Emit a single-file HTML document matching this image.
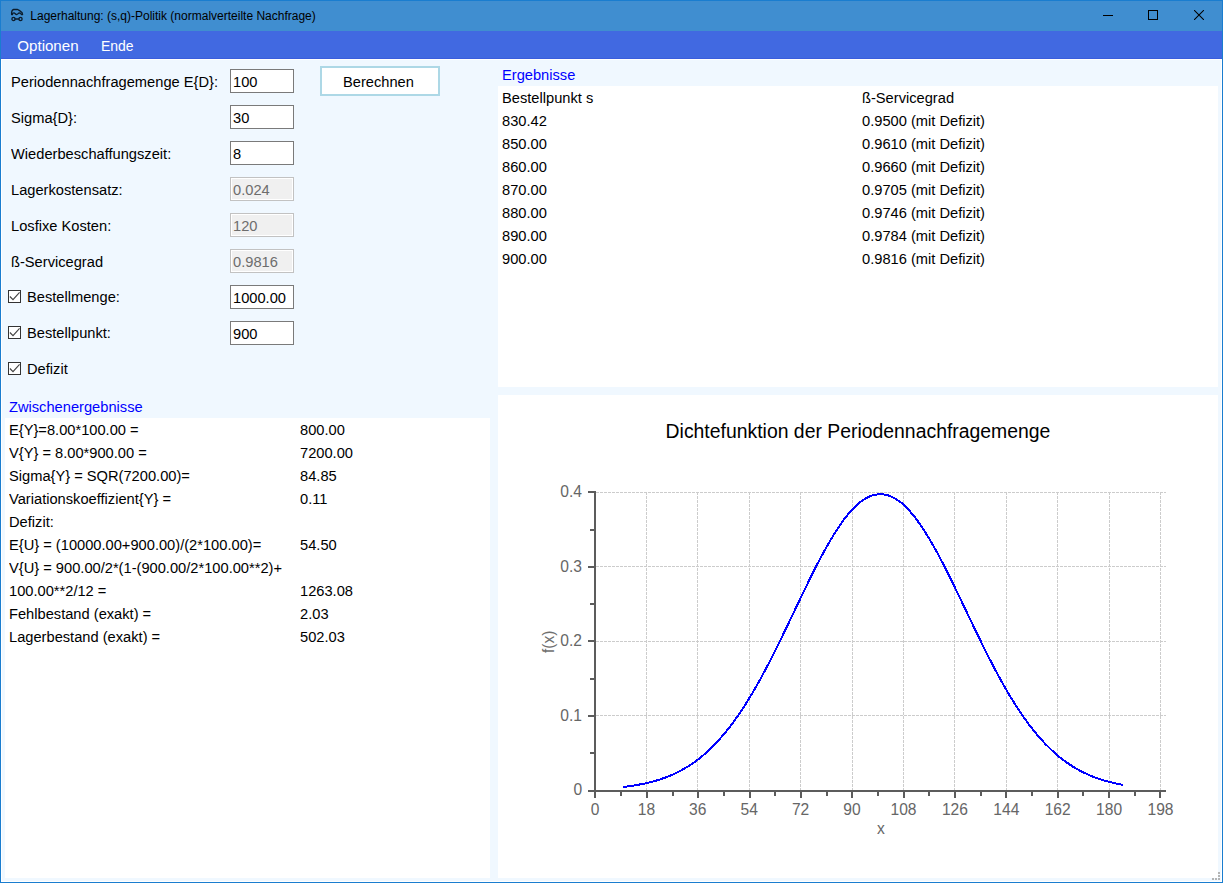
<!DOCTYPE html>
<html><head><meta charset="utf-8"><title>Lagerhaltung</title>
<style>
html,body{margin:0;padding:0;}
body{width:1223px;height:883px;overflow:hidden;background:#F0F8FF;position:relative;font-family:"Liberation Sans",sans-serif;}
.t{position:absolute;white-space:pre;line-height:1;font-family:"Liberation Sans",sans-serif;}
.b{position:absolute;box-sizing:border-box;}
.in{position:absolute;box-sizing:border-box;width:64px;height:24px;border:1px solid #7A7A7A;background:#fff;}
.in.dis{border-color:#C2C2C2;background:#F0F0F0;box-shadow:inset 0 0 0 1px #fff;}
.cb{position:absolute;box-sizing:border-box;width:13px;height:13px;border:1px solid #333;background:#fff;}
</style></head><body>

<div class="b" style="left:0;top:0;width:1223px;height:31px;background:#408ED0;"></div>
<div class="b" style="left:0;top:31px;width:1223px;height:28px;background:#4169E1;"></div>
<div class="b" style="left:1px;top:59px;width:1221px;height:823px;border:1px solid #fff;"></div>
<div class="b" style="left:0;top:58px;width:1223px;height:1px;background:#3A5DDC;"></div>
<div class="b" style="left:0;top:0;width:1223px;height:883px;border:1px solid #1A7DCF;"></div>
<svg class="b" style="left:10px;top:8px" width="14" height="14" viewBox="0 0 14 14" fill="none" stroke="#0B1C2C" stroke-width="1.3" stroke-linecap="round" stroke-linejoin="round">
<path d="M1.6 6.6 L1.6 4.9 C1.7 3.4 2.4 1.7 3.6 1.5 L7.6 1.5 C8.6 1.9 9.6 2.9 10.6 3.3 C12 3.9 12.6 4.9 12.6 6.6 L11.4 6.6 C11 5.4 10.2 4.9 9.2 4.9 C8.2 5 7.9 6.5 6.6 6.5 C5.3 6.5 5.2 4.9 3.9 4.9 C3 4.9 2.6 5.6 2.4 6.6 Z"/>
<circle cx="3.5" cy="11" r="1.6"/><circle cx="10.5" cy="11" r="1.6"/>
<path d="M5.1 11 L8.9 11" stroke-width="1.6"/>
</svg>
<div class="t " style="left:30.3px;top:9.84px;font-size:12px;color:#000;">Lagerhaltung: (s,q)-Politik (normalverteilte Nachfrage)</div>
<div class="b" style="left:1103px;top:15px;width:10px;height:1px;background:#000"></div>
<div class="b" style="left:1148px;top:10px;width:10px;height:10px;border:1px solid #000"></div>
<svg class="b" style="left:1194px;top:10px" width="10" height="10" viewBox="0 0 10 10"><path d="M0 0 L10 10 M10 0 L0 10" stroke="#000" stroke-width="1.05" fill="none"/></svg>
<div class="t " style="left:17.3px;top:37.92px;font-size:15.1px;color:#fff;">Optionen</div>
<div class="t " style="left:100.5px;top:37.92px;font-size:15.1px;color:#fff;transform:scaleX(0.9250);transform-origin:0 0;">Ende</div>
<div class="t " style="left:11.3px;top:73.93px;font-size:15.2px;color:#000;transform:scaleX(0.9651);transform-origin:0 0;">Periodennachfragemenge E{D}:</div>
<div class="in" style="left:230px;top:69px"></div>
<div class="t " style="left:233.0px;top:73.93px;font-size:15.2px;color:#000;transform:scaleX(0.9651);transform-origin:0 0;">100</div>
<div class="t " style="left:11.3px;top:109.93px;font-size:15.2px;color:#000;transform:scaleX(0.9651);transform-origin:0 0;">Sigma{D}:</div>
<div class="in" style="left:230px;top:105px"></div>
<div class="t " style="left:233.0px;top:109.93px;font-size:15.2px;color:#000;transform:scaleX(0.9651);transform-origin:0 0;">30</div>
<div class="t " style="left:11.3px;top:145.93px;font-size:15.2px;color:#000;transform:scaleX(0.9651);transform-origin:0 0;">Wiederbeschaffungszeit:</div>
<div class="in" style="left:230px;top:141px"></div>
<div class="t " style="left:233.0px;top:145.93px;font-size:15.2px;color:#000;transform:scaleX(0.9651);transform-origin:0 0;">8</div>
<div class="t " style="left:11.3px;top:181.93px;font-size:15.2px;color:#000;transform:scaleX(0.9651);transform-origin:0 0;">Lagerkostensatz:</div>
<div class="in dis" style="left:230px;top:177px"></div>
<div class="t " style="left:233.0px;top:181.93px;font-size:15.2px;color:#6D6D6D;transform:scaleX(0.9651);transform-origin:0 0;">0.024</div>
<div class="t " style="left:11.3px;top:217.93px;font-size:15.2px;color:#000;transform:scaleX(0.9651);transform-origin:0 0;">Losfixe Kosten:</div>
<div class="in dis" style="left:230px;top:213px"></div>
<div class="t " style="left:233.0px;top:217.93px;font-size:15.2px;color:#6D6D6D;transform:scaleX(0.9651);transform-origin:0 0;">120</div>
<div class="t " style="left:11.3px;top:253.93px;font-size:15.2px;color:#000;transform:scaleX(0.9651);transform-origin:0 0;">ß-Servicegrad</div>
<div class="in dis" style="left:230px;top:249px"></div>
<div class="t " style="left:233.0px;top:253.93px;font-size:15.2px;color:#6D6D6D;transform:scaleX(0.9651);transform-origin:0 0;">0.9816</div>
<div class="cb" style="left:8px;top:290px"><svg width="11" height="11" viewBox="0 0 11 11" style="position:absolute;left:0;top:0"><path d="M0.9 5.5 L4 8.6 L10.6 1.3" stroke="#444" stroke-width="1.15" fill="none"/></svg></div>
<div class="t " style="left:27.3px;top:289.43px;font-size:15.2px;color:#000;transform:scaleX(0.9651);transform-origin:0 0;">Bestellmenge:</div>
<div class="in" style="left:230px;top:285px"></div>
<div class="t " style="left:233.0px;top:289.93px;font-size:15.2px;color:#000;transform:scaleX(0.9651);transform-origin:0 0;">1000.00</div>
<div class="cb" style="left:8px;top:326px"><svg width="11" height="11" viewBox="0 0 11 11" style="position:absolute;left:0;top:0"><path d="M0.9 5.5 L4 8.6 L10.6 1.3" stroke="#444" stroke-width="1.15" fill="none"/></svg></div>
<div class="t " style="left:27.3px;top:325.43px;font-size:15.2px;color:#000;transform:scaleX(0.9651);transform-origin:0 0;">Bestellpunkt:</div>
<div class="in" style="left:230px;top:321px"></div>
<div class="t " style="left:233.0px;top:325.93px;font-size:15.2px;color:#000;transform:scaleX(0.9651);transform-origin:0 0;">900</div>
<div class="cb" style="left:8px;top:362px"><svg width="11" height="11" viewBox="0 0 11 11" style="position:absolute;left:0;top:0"><path d="M0.9 5.5 L4 8.6 L10.6 1.3" stroke="#444" stroke-width="1.15" fill="none"/></svg></div>
<div class="t " style="left:27.3px;top:361.43px;font-size:15.2px;color:#000;transform:scaleX(0.9651);transform-origin:0 0;">Defizit</div>
<div class="b" style="left:320px;top:66px;width:120px;height:30px;border:2px solid #ADD8E6;background:#fff"></div>
<div class="t " style="left:343.2px;top:73.93px;font-size:15.2px;color:#000;transform:scaleX(0.9651);transform-origin:0 0;">Berechnen</div>
<div class="t " style="left:9px;top:399.23px;font-size:15.2px;color:#0000FF;transform:scaleX(0.9651);transform-origin:0 0;">Zwischenergebnisse</div>
<div class="b" style="left:5px;top:418px;width:485px;height:460px;background:#fff"></div>
<div class="t " style="left:9px;top:422.23px;font-size:15.2px;color:#000;transform:scaleX(0.9651);transform-origin:0 0;">E{Y}=8.00*100.00 =</div>
<div class="t " style="left:300.3px;top:422.23px;font-size:15.2px;color:#000;transform:scaleX(0.9651);transform-origin:0 0;">800.00</div>
<div class="t " style="left:9px;top:445.23px;font-size:15.2px;color:#000;transform:scaleX(0.9651);transform-origin:0 0;">V{Y} = 8.00*900.00 =</div>
<div class="t " style="left:300.3px;top:445.23px;font-size:15.2px;color:#000;transform:scaleX(0.9651);transform-origin:0 0;">7200.00</div>
<div class="t " style="left:9px;top:468.23px;font-size:15.2px;color:#000;transform:scaleX(0.9651);transform-origin:0 0;">Sigma{Y} = SQR(7200.00)=</div>
<div class="t " style="left:300.3px;top:468.23px;font-size:15.2px;color:#000;transform:scaleX(0.9651);transform-origin:0 0;">84.85</div>
<div class="t " style="left:9px;top:491.23px;font-size:15.2px;color:#000;transform:scaleX(0.9651);transform-origin:0 0;">Variationskoeffizient{Y} =</div>
<div class="t " style="left:300.3px;top:491.23px;font-size:15.2px;color:#000;transform:scaleX(0.9651);transform-origin:0 0;">0.11</div>
<div class="t " style="left:9px;top:514.23px;font-size:15.2px;color:#000;transform:scaleX(0.9651);transform-origin:0 0;">Defizit:</div>
<div class="t " style="left:9px;top:537.23px;font-size:15.2px;color:#000;transform:scaleX(0.9651);transform-origin:0 0;">E{U} = (10000.00+900.00)/(2*100.00)=</div>
<div class="t " style="left:300.3px;top:537.23px;font-size:15.2px;color:#000;transform:scaleX(0.9651);transform-origin:0 0;">54.50</div>
<div class="t " style="left:9px;top:560.23px;font-size:15.2px;color:#000;transform:scaleX(0.9651);transform-origin:0 0;">V{U} = 900.00/2*(1-(900.00/2*100.00**2)+</div>
<div class="t " style="left:9px;top:583.23px;font-size:15.2px;color:#000;transform:scaleX(0.9651);transform-origin:0 0;">100.00**2/12 =</div>
<div class="t " style="left:300.3px;top:583.23px;font-size:15.2px;color:#000;transform:scaleX(0.9651);transform-origin:0 0;">1263.08</div>
<div class="t " style="left:9px;top:606.23px;font-size:15.2px;color:#000;transform:scaleX(0.9651);transform-origin:0 0;">Fehlbestand (exakt) =</div>
<div class="t " style="left:300.3px;top:606.23px;font-size:15.2px;color:#000;transform:scaleX(0.9651);transform-origin:0 0;">2.03</div>
<div class="t " style="left:9px;top:629.23px;font-size:15.2px;color:#000;transform:scaleX(0.9651);transform-origin:0 0;">Lagerbestand (exakt) =</div>
<div class="t " style="left:300.3px;top:629.23px;font-size:15.2px;color:#000;transform:scaleX(0.9651);transform-origin:0 0;">502.03</div>
<div class="t " style="left:502.2px;top:67.23px;font-size:15.2px;color:#0000FF;transform:scaleX(0.9651);transform-origin:0 0;">Ergebnisse</div>
<div class="b" style="left:498px;top:86px;width:720px;height:301px;background:#fff"></div>
<div class="b" style="left:498px;top:395px;width:720px;height:483px;background:#fff"></div>
<div class="t " style="left:501.8px;top:90.23px;font-size:15.2px;color:#000;transform:scaleX(0.9651);transform-origin:0 0;">Bestellpunkt s</div>
<div class="t " style="left:861.7px;top:90.23px;font-size:15.2px;color:#000;transform:scaleX(0.9651);transform-origin:0 0;">ß-Servicegrad</div>
<div class="t " style="left:501.8px;top:113.23px;font-size:15.2px;color:#000;transform:scaleX(0.9651);transform-origin:0 0;">830.42</div>
<div class="t " style="left:861.7px;top:113.23px;font-size:15.2px;color:#000;transform:scaleX(0.9651);transform-origin:0 0;">0.9500 (mit Defizit)</div>
<div class="t " style="left:501.8px;top:136.23px;font-size:15.2px;color:#000;transform:scaleX(0.9651);transform-origin:0 0;">850.00</div>
<div class="t " style="left:861.7px;top:136.23px;font-size:15.2px;color:#000;transform:scaleX(0.9651);transform-origin:0 0;">0.9610 (mit Defizit)</div>
<div class="t " style="left:501.8px;top:159.23px;font-size:15.2px;color:#000;transform:scaleX(0.9651);transform-origin:0 0;">860.00</div>
<div class="t " style="left:861.7px;top:159.23px;font-size:15.2px;color:#000;transform:scaleX(0.9651);transform-origin:0 0;">0.9660 (mit Defizit)</div>
<div class="t " style="left:501.8px;top:182.23px;font-size:15.2px;color:#000;transform:scaleX(0.9651);transform-origin:0 0;">870.00</div>
<div class="t " style="left:861.7px;top:182.23px;font-size:15.2px;color:#000;transform:scaleX(0.9651);transform-origin:0 0;">0.9705 (mit Defizit)</div>
<div class="t " style="left:501.8px;top:205.23px;font-size:15.2px;color:#000;transform:scaleX(0.9651);transform-origin:0 0;">880.00</div>
<div class="t " style="left:861.7px;top:205.23px;font-size:15.2px;color:#000;transform:scaleX(0.9651);transform-origin:0 0;">0.9746 (mit Defizit)</div>
<div class="t " style="left:501.8px;top:228.23px;font-size:15.2px;color:#000;transform:scaleX(0.9651);transform-origin:0 0;">890.00</div>
<div class="t " style="left:861.7px;top:228.23px;font-size:15.2px;color:#000;transform:scaleX(0.9651);transform-origin:0 0;">0.9784 (mit Defizit)</div>
<div class="t " style="left:501.8px;top:251.23px;font-size:15.2px;color:#000;transform:scaleX(0.9651);transform-origin:0 0;">900.00</div>
<div class="t " style="left:861.7px;top:251.23px;font-size:15.2px;color:#000;transform:scaleX(0.9651);transform-origin:0 0;">0.9816 (mit Defizit)</div>
<div class="b" style="left:1218px;top:872px;width:2px;height:2px;background:#B4B4B4"></div>
<div class="b" style="left:1218px;top:875px;width:2px;height:2px;background:#B4B4B4"></div>
<div class="b" style="left:1218px;top:878px;width:2px;height:2px;background:#B4B4B4"></div>
<div class="b" style="left:1215px;top:878px;width:2px;height:2px;background:#B4B4B4"></div>
<div class="b" style="left:1212px;top:878px;width:2px;height:2px;background:#B4B4B4"></div>
<svg class="b" style="left:0;top:0" width="1223" height="883" viewBox="0 0 1223 883">
<g stroke="#CCCCCC" stroke-width="1" stroke-dasharray="3 1" shape-rendering="crispEdges">
<line x1="646.5" y1="492" x2="646.5" y2="790"/>
<line x1="697.5" y1="492" x2="697.5" y2="790"/>
<line x1="749.5" y1="492" x2="749.5" y2="790"/>
<line x1="800.5" y1="492" x2="800.5" y2="790"/>
<line x1="852.5" y1="492" x2="852.5" y2="790"/>
<line x1="903.5" y1="492" x2="903.5" y2="790"/>
<line x1="954.5" y1="492" x2="954.5" y2="790"/>
<line x1="1006.5" y1="492" x2="1006.5" y2="790"/>
<line x1="1057.5" y1="492" x2="1057.5" y2="790"/>
<line x1="1109.5" y1="492" x2="1109.5" y2="790"/>
<line x1="1160.5" y1="492" x2="1160.5" y2="790"/>
<line x1="596" y1="492.5" x2="1166" y2="492.5"/>
<line x1="596" y1="566.5" x2="1166" y2="566.5"/>
<line x1="596" y1="641.5" x2="1166" y2="641.5"/>
<line x1="596" y1="715.5" x2="1166" y2="715.5"/>
</g>
<g fill="#5C5C5C" shape-rendering="crispEdges">
<rect x="594" y="491" width="2" height="307"/>
<rect x="588" y="790" width="578" height="2"/>
<rect x="588" y="491" width="7" height="2"/>
<rect x="588" y="566" width="7" height="2"/>
<rect x="588" y="640" width="7" height="2"/>
<rect x="588" y="715" width="7" height="2"/>
<rect x="590" y="529" width="5" height="2"/>
<rect x="590" y="603" width="5" height="2"/>
<rect x="590" y="678" width="5" height="2"/>
<rect x="590" y="752" width="5" height="2"/>
<rect x="646" y="790" width="2" height="8"/>
<rect x="697" y="790" width="2" height="8"/>
<rect x="749" y="790" width="2" height="8"/>
<rect x="800" y="790" width="2" height="8"/>
<rect x="851" y="790" width="2" height="8"/>
<rect x="903" y="790" width="2" height="8"/>
<rect x="954" y="790" width="2" height="8"/>
<rect x="1005" y="790" width="2" height="8"/>
<rect x="1057" y="790" width="2" height="8"/>
<rect x="1108" y="790" width="2" height="8"/>
<rect x="1159" y="790" width="2" height="8"/>
<rect x="620" y="790" width="2" height="6"/>
<rect x="672" y="790" width="2" height="6"/>
<rect x="723" y="790" width="2" height="6"/>
<rect x="774" y="790" width="2" height="6"/>
<rect x="826" y="790" width="2" height="6"/>
<rect x="877" y="790" width="2" height="6"/>
<rect x="928" y="790" width="2" height="6"/>
<rect x="980" y="790" width="2" height="6"/>
<rect x="1031" y="790" width="2" height="6"/>
<rect x="1082" y="790" width="2" height="6"/>
<rect x="1134" y="790" width="2" height="6"/>
</g>
<polyline points="623.3,787.0 630.4,786.1 637.5,784.9 644.7,783.5 651.8,781.8 659.0,779.8 666.1,777.3 673.2,774.3 680.4,770.8 687.5,766.7 694.7,762.0 701.8,756.5 708.9,750.2 716.1,743.1 723.2,735.1 730.4,726.2 737.5,716.4 744.6,705.7 751.8,694.1 758.9,681.7 766.1,668.5 773.2,654.6 780.3,640.3 787.5,625.5 794.6,610.6 801.8,595.6 808.9,580.9 816.0,566.6 823.2,553.0 830.3,540.4 837.5,528.8 844.6,518.6 851.7,510.0 858.9,503.1 866.0,498.1 873.2,495.0 880.3,494.0 887.4,495.0 894.6,498.1 901.7,503.1 908.9,510.0 916.0,518.6 923.1,528.8 930.3,540.4 937.4,553.0 944.6,566.6 951.7,580.9 958.8,595.6 966.0,610.6 973.1,625.5 980.3,640.3 987.4,654.6 994.5,668.5 1001.7,681.7 1008.8,694.1 1016.0,705.7 1023.1,716.4 1030.2,726.2 1037.4,735.1 1044.5,743.1 1051.7,750.2 1058.8,756.5 1066.0,762.0 1073.1,766.7 1080.2,770.8 1087.4,774.3 1094.5,777.3 1101.7,779.8 1108.8,781.8 1115.9,783.5 1123.1,784.9" fill="none" stroke="#0000FF" stroke-width="2" shape-rendering="crispEdges"/>
</svg>
<div class="t" style="left:498px;width:720px;text-align:center;top:421.98px;font-size:19.4px;color:#000">Dichtefunktion der Periodennachfragemenge</div>
<div class="t" style="left:565.0px;width:60px;text-align:center;top:801.79px;font-size:15.6px;color:#666666">0</div>
<div class="t" style="left:616.4px;width:60px;text-align:center;top:801.79px;font-size:15.6px;color:#666666">18</div>
<div class="t" style="left:667.8px;width:60px;text-align:center;top:801.79px;font-size:15.6px;color:#666666">36</div>
<div class="t" style="left:719.2px;width:60px;text-align:center;top:801.79px;font-size:15.6px;color:#666666">54</div>
<div class="t" style="left:770.6px;width:60px;text-align:center;top:801.79px;font-size:15.6px;color:#666666">72</div>
<div class="t" style="left:822.0px;width:60px;text-align:center;top:801.79px;font-size:15.6px;color:#666666">90</div>
<div class="t" style="left:873.5px;width:60px;text-align:center;top:801.79px;font-size:15.6px;color:#666666">108</div>
<div class="t" style="left:924.9px;width:60px;text-align:center;top:801.79px;font-size:15.6px;color:#666666">126</div>
<div class="t" style="left:976.3px;width:60px;text-align:center;top:801.79px;font-size:15.6px;color:#666666">144</div>
<div class="t" style="left:1027.7px;width:60px;text-align:center;top:801.79px;font-size:15.6px;color:#666666">162</div>
<div class="t" style="left:1079.1px;width:60px;text-align:center;top:801.79px;font-size:15.6px;color:#666666">180</div>
<div class="t" style="left:1130.5px;width:60px;text-align:center;top:801.79px;font-size:15.6px;color:#666666">198</div>
<div class="t" style="left:522px;width:59.9px;text-align:right;top:483.79px;font-size:15.6px;color:#666666">0.4</div>
<div class="t" style="left:522px;width:59.9px;text-align:right;top:559.29px;font-size:15.6px;color:#666666">0.3</div>
<div class="t" style="left:522px;width:59.9px;text-align:right;top:632.79px;font-size:15.6px;color:#666666">0.2</div>
<div class="t" style="left:522px;width:59.9px;text-align:right;top:708.39px;font-size:15.6px;color:#666666">0.1</div>
<div class="t" style="left:522px;width:60.3px;text-align:right;top:781.79px;font-size:15.6px;color:#666666">0</div>
<div class="t" style="left:851px;width:60px;text-align:center;top:820.89px;font-size:15.6px;color:#666666">x</div>
<div class="t" style="left:518.5px;width:60px;text-align:center;top:634.40px;font-size:15.6px;color:#707070;transform:rotate(-90deg);transform-origin:50% 50%">f(x)</div>
</body></html>
